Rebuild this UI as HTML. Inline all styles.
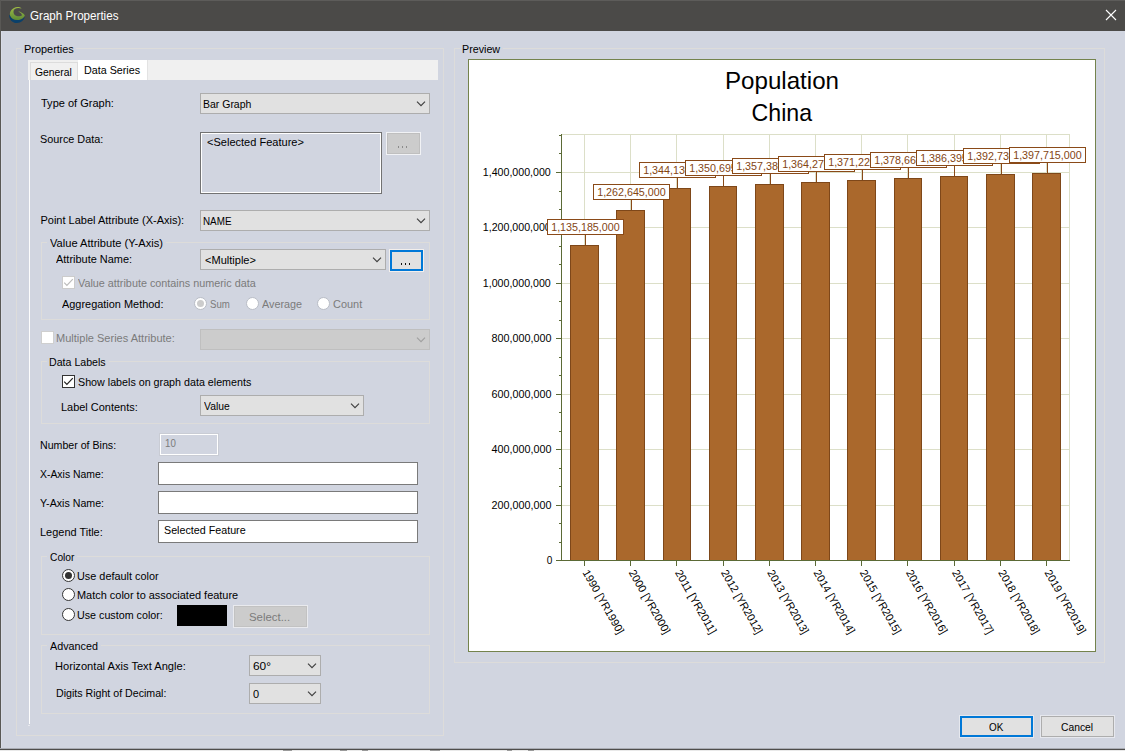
<!DOCTYPE html>
<html><head><meta charset="utf-8"><title>Graph Properties</title>
<style>
html,body{margin:0;padding:0}
body{width:1125px;height:751px;overflow:hidden;position:relative;background:#d1d5e0;font-family:"Liberation Sans",sans-serif;font-size:11px;color:#000}
.a{position:absolute;box-sizing:border-box}
.t{position:absolute;white-space:nowrap;line-height:13px;transform-origin:0 0;display:inline-block}
.gb{position:absolute;box-sizing:border-box;border:1px solid #dddcda}
.gl{position:absolute;background:#d1d5e0;height:13px}
.cb{position:absolute;box-sizing:border-box;border:1px solid #adadad;background:#e1e1e1}
.cbd{position:absolute;box-sizing:border-box;border:1px solid #bfbfbf;background:#cccccc}
.ed{position:absolute;box-sizing:border-box;border:1px solid #7a7a7a;background:#fff}
.chev{position:absolute;width:10px;height:6px}
.rad{position:absolute;box-sizing:border-box;width:13px;height:13px;border-radius:50%;border:1px solid #333;background:#fff}
.chk{position:absolute;box-sizing:border-box;width:13px;height:13px;border:1px solid #333;background:#fff}
</style></head><body>

<div class="a" style="left:0;top:0;width:1125px;height:31px;background:#4b4a48"></div>
<div class="a" style="left:0;top:0;width:1125px;height:1px;background:#5d5c5a"></div>
<div class="a" style="left:0;top:0;width:1px;height:750px;background:#595855"></div>
<div class="a" style="left:1px;top:31px;width:1px;height:718px;background:#d8dce7"></div>
<div class="a" style="left:0;top:748px;width:1125px;height:1px;background:#a9acb4"></div>
<div class="a" style="left:0;top:749px;width:1125px;height:1px;background:#4e4d4b"></div>
<div class="a" style="left:0;top:750px;width:1125px;height:1px;background:#e9e9e9"></div>
<div class="a" style="left:283px;top:750px;width:9px;height:1px;background:#9a9a9a"></div>
<div class="a" style="left:340px;top:750px;width:7px;height:1px;background:#9a9a9a"></div>
<div class="a" style="left:362px;top:750px;width:6px;height:1px;background:#9a9a9a"></div>
<div class="a" style="left:430px;top:750px;width:10px;height:1px;background:#9a9a9a"></div>
<div class="a" style="left:507px;top:750px;width:5px;height:1px;background:#9a9a9a"></div>
<div class="a" style="left:528px;top:750px;width:6px;height:1px;background:#9a9a9a"></div>
<svg class="a" style="left:1104px;top:8px" width="14" height="14" viewBox="0 0 14 14"><path d="M2 2 L12 12 M12 2 L2 12" stroke="#ffffff" stroke-width="1.1" fill="none"/></svg>
<svg class="a" style="left:8px;top:6px" width="18" height="18" viewBox="0 0 18 18">
<defs><linearGradient id="gg" x1="0" y1="0" x2="0" y2="1"><stop offset="0" stop-color="#9fbd45"/><stop offset="1" stop-color="#5c8a36"/></linearGradient></defs>
<path d="M1.3 8.4 C0.5 12.6 4 17 8.8 17 C13.2 17 16.3 14 16.7 10.8 C14.8 13.4 11.5 14.3 8.6 13.9 C5 13.3 2.4 11 1.3 8.4 Z" fill="#0a406a"/>
<path d="M13.6 2.4 C11.8 1 8.6 0.6 6 1.9 C2.6 3.6 1.3 6.9 2.2 9.7 C3.2 12.5 6.4 14.2 9.6 14 C13.2 13.8 16.2 11.7 16.8 9.2 C15.4 7.4 12.6 5.6 10.2 5.3 C12 6.4 13.6 7.8 14 9.2 C12.8 10.2 10.6 10.6 8.6 10 C6.2 9.2 5 6.8 5.6 4.7 C6.4 2.2 9.6 1.2 13.6 2.4 Z" fill="url(#gg)"/>
</svg>
<div class="gb" style="left:16px;top:48px;width:428px;height:688px"></div>
<div class="gb" style="left:454px;top:48px;width:651px;height:615px"></div>
<div class="a" style="left:28px;top:60px;width:410px;height:20px;background:#f0f0f0"></div>
<div class="a" style="left:30px;top:62px;width:48px;height:18px;background:#f0f0f0;border:1px solid #dcdcdc;border-bottom:none"></div>
<div class="a" style="left:78px;top:60px;width:69px;height:20px;background:#ffffff"></div>
<div class="a" style="left:147px;top:60px;width:1px;height:20px;background:#e3e3e3"></div>
<div class="a" style="left:29px;top:80px;width:1px;height:644px;background:#fdfdfd"></div>
<div class="a" style="left:28px;top:725px;width:2px;height:1px;background:#e8e9ee"></div>
<div class="gb" style="left:41px;top:242px;width:389px;height:78px"></div>
<div class="gb" style="left:41px;top:361px;width:389px;height:63px"></div>
<div class="gb" style="left:41px;top:556px;width:389px;height:79px"></div>
<div class="gb" style="left:41px;top:645px;width:389px;height:69px"></div>
<div class="gl" style="left:21px;top:43px;width:55px"></div>
<div class="gl" style="left:460px;top:43px;width:43px"></div>
<div class="gl" style="left:47px;top:237px;width:119px"></div>
<div class="gl" style="left:47px;top:356px;width:62px"></div>
<div class="gl" style="left:47px;top:551px;width:30px"></div>
<div class="gl" style="left:47px;top:640px;width:54px"></div>
<div class="cb" style="left:200px;top:93px;width:230px;height:21px"></div>
<svg class="chev" style="left:416px;top:101px" viewBox="0 0 10 6"><path d="M1 0.6 L5 4.6 L9 0.6" stroke="#404040" stroke-width="1.15" fill="none"/></svg>
<div class="cb" style="left:200px;top:210px;width:230px;height:21px"></div>
<svg class="chev" style="left:416px;top:218px" viewBox="0 0 10 6"><path d="M1 0.6 L5 4.6 L9 0.6" stroke="#404040" stroke-width="1.15" fill="none"/></svg>
<div class="cb" style="left:200px;top:249px;width:186px;height:21px"></div>
<svg class="chev" style="left:372px;top:257px" viewBox="0 0 10 6"><path d="M1 0.6 L5 4.6 L9 0.6" stroke="#404040" stroke-width="1.15" fill="none"/></svg>
<div class="cbd" style="left:200px;top:329px;width:230px;height:21px"></div>
<svg class="chev" style="left:416px;top:337px" viewBox="0 0 10 6"><path d="M1 0.6 L5 4.6 L9 0.6" stroke="#a0a0a0" stroke-width="1.15" fill="none"/></svg>
<div class="cb" style="left:200px;top:395px;width:164px;height:21px"></div>
<svg class="chev" style="left:350px;top:403px" viewBox="0 0 10 6"><path d="M1 0.6 L5 4.6 L9 0.6" stroke="#404040" stroke-width="1.15" fill="none"/></svg>
<div class="cb" style="left:249px;top:655px;width:72px;height:21px"></div>
<svg class="chev" style="left:307px;top:663px" viewBox="0 0 10 6"><path d="M1 0.6 L5 4.6 L9 0.6" stroke="#404040" stroke-width="1.15" fill="none"/></svg>
<div class="cb" style="left:249px;top:683px;width:72px;height:21px"></div>
<svg class="chev" style="left:307px;top:691px" viewBox="0 0 10 6"><path d="M1 0.6 L5 4.6 L9 0.6" stroke="#404040" stroke-width="1.15" fill="none"/></svg>
<div class="a" style="left:200px;top:132px;width:182px;height:62px;background:#d1d5e0;border:1px solid #727272;box-shadow:inset 0 0 0 1px #ffffff"></div>
<div class="a" style="left:386px;top:132px;width:35px;height:23px;background:#cccccc;border:1px solid #f1f2f5;box-shadow:inset 0 0 0 1px #bfbfbf"></div>
<div class="a" style="left:398px;top:146px;width:1px;height:2px;background:#8b8b8b"></div>
<div class="a" style="left:402px;top:146px;width:1px;height:2px;background:#8b8b8b"></div>
<div class="a" style="left:406px;top:146px;width:1px;height:2px;background:#8b8b8b"></div>
<div class="a" style="left:389px;top:249px;width:35px;height:23px;background:#e1e1e1;border:1px solid #f3efec;box-shadow:inset 0 0 0 2px #0078d7"></div>
<div class="a" style="left:401px;top:263px;width:1px;height:2px;background:#101010"></div>
<div class="a" style="left:405px;top:263px;width:1px;height:2px;background:#101010"></div>
<div class="a" style="left:409px;top:263px;width:1px;height:2px;background:#101010"></div>
<div class="chk" style="left:62px;top:276px;border-color:#cccccc"></div>
<svg class="a" style="left:62px;top:276px" width="13" height="13" viewBox="0 0 13 13"><path d="M2.2 6.6 L4.9 9.3 L10.8 3.1" stroke="#bcbcbc" stroke-width="1.2" fill="none"/></svg>
<div class="chk" style="left:41px;top:331px;border-color:#cfcfcf"></div>
<div class="chk" style="left:62px;top:375px"></div>
<svg class="a" style="left:62px;top:375px" width="13" height="13" viewBox="0 0 13 13"><path d="M2.2 6.6 L4.9 9.3 L10.8 3.1" stroke="#222" stroke-width="1.2" fill="none"/></svg>
<div class="rad" style="left:194px;top:297px;border-color:#b9bdc6"></div>
<div class="a" style="left:197px;top:300px;width:7px;height:7px;border-radius:50%;background:#cccccc"></div>
<div class="rad" style="left:246px;top:297px;border-color:#b9bdc6"></div>
<div class="rad" style="left:317px;top:297px;border-color:#b9bdc6"></div>
<div class="rad" style="left:62px;top:569px;"></div>
<div class="a" style="left:65px;top:572px;width:7px;height:7px;border-radius:50%;background:#333"></div>
<div class="rad" style="left:62px;top:588px;"></div>
<div class="rad" style="left:62px;top:608px;"></div>
<div class="a" style="left:159px;top:433px;width:60px;height:23px;background:#d1d5e0;border:1px solid #c9ccd4;box-shadow:inset 0 0 0 1px #ffffff"></div>
<div class="ed" style="left:158px;top:462px;width:260px;height:23px"></div>
<div class="ed" style="left:158px;top:491px;width:260px;height:23px"></div>
<div class="ed" style="left:158px;top:520px;width:260px;height:23px"></div>
<div class="a" style="left:177px;top:605px;width:50px;height:21px;background:#000"></div>
<div class="a" style="left:233px;top:605px;width:75px;height:23px;background:#cccccc;border:1px solid #e9eaee;box-shadow:inset 0 0 0 1px #c2c2c2"></div>
<div class="a" style="left:959px;top:715px;width:75px;height:23px;background:#e1e1e1;border:1px solid #e6e8ee;box-shadow:inset 0 0 0 2px #0078d7"></div>
<div class="a" style="left:1040px;top:715px;width:75px;height:23px;background:#e1e1e1;border:1px solid #e6e8ee;box-shadow:inset 0 0 0 1px #adadad"></div>
<svg class="a" style="left:468px;top:59px" width="628" height="593" viewBox="468 59 628 593" font-family="Liberation Sans, sans-serif" font-size="11">
<rect x="468.5" y="59.5" width="627" height="592" fill="#ffffff" stroke="#74834d"/>
<text x="782" y="88.7" font-size="24.4" text-anchor="middle" fill="#000" textLength="114" lengthAdjust="spacingAndGlyphs">Population</text>
<text x="781.8" y="121.4" font-size="24.4" text-anchor="middle" fill="#000" textLength="60.5" lengthAdjust="spacingAndGlyphs">China</text>
<path d="M584.5 134V560 M630.5 134V560 M676.5 134V560 M723.5 134V560 M769.5 134V560 M815.5 134V560 M861.5 134V560 M907.5 134V560 M954.5 134V560 M1000.5 134V560 M1046.5 134V560 M561 505.5H1070 M561 449.5H1070 M561 394.5H1070 M561 338.5H1070 M561 283.5H1070 M561 227.5H1070 M561 172.5H1070 M561 134.5H1070 M1069.5 134V560" stroke="#dcdfc8" stroke-width="1" fill="none" shape-rendering="crispEdges"/>
<rect x="570.5" y="245.5" width="28" height="315.0" fill="#aa682c" stroke="#7e4719" shape-rendering="crispEdges"/>
<rect x="616.5" y="210.5" width="28" height="350.0" fill="#aa682c" stroke="#7e4719" shape-rendering="crispEdges"/>
<rect x="663.5" y="188.5" width="27" height="372.0" fill="#aa682c" stroke="#7e4719" shape-rendering="crispEdges"/>
<rect x="709.5" y="186.5" width="27" height="374.0" fill="#aa682c" stroke="#7e4719" shape-rendering="crispEdges"/>
<rect x="755.5" y="184.5" width="28" height="376.0" fill="#aa682c" stroke="#7e4719" shape-rendering="crispEdges"/>
<rect x="801.5" y="182.5" width="28" height="378.0" fill="#aa682c" stroke="#7e4719" shape-rendering="crispEdges"/>
<rect x="847.5" y="180.5" width="28" height="380.0" fill="#aa682c" stroke="#7e4719" shape-rendering="crispEdges"/>
<rect x="894.5" y="178.5" width="27" height="382.0" fill="#aa682c" stroke="#7e4719" shape-rendering="crispEdges"/>
<rect x="940.5" y="176.5" width="27" height="384.0" fill="#aa682c" stroke="#7e4719" shape-rendering="crispEdges"/>
<rect x="986.5" y="174.5" width="28" height="386.0" fill="#aa682c" stroke="#7e4719" shape-rendering="crispEdges"/>
<rect x="1032.5" y="173.5" width="28" height="387.0" fill="#aa682c" stroke="#7e4719" shape-rendering="crispEdges"/>
<path d="M561.5 134V561 M556 560.5H1070 M556 560.5H561 M559 542.5H561 M559 523.5H561 M556 505.5H561 M559 486.5H561 M559 468.5H561 M556 449.5H561 M559 431.5H561 M559 412.5H561 M556 394.5H561 M559 375.5H561 M559 357.5H561 M556 338.5H561 M559 320.5H561 M559 301.5H561 M556 283.5H561 M559 264.5H561 M559 246.5H561 M556 227.5H561 M559 209.5H561 M559 191.5H561 M556 172.5H561 M559 153.5H561 M559 135.5H561 M584.5 560V566 M630.5 560V566 M676.5 560V566 M723.5 560V566 M769.5 560V566 M815.5 560V566 M861.5 560V566 M907.5 560V566 M954.5 560V566 M1000.5 560V566 M1046.5 560V566" stroke="#5b6a36" stroke-width="1" fill="none" shape-rendering="crispEdges"/>
<text x="552.3" y="564.2" text-anchor="end" fill="#000" textLength="5.6" lengthAdjust="spacingAndGlyphs">0</text>
<text x="551.5" y="509.2" text-anchor="end" fill="#000" textLength="60" lengthAdjust="spacingAndGlyphs">200,000,000</text>
<text x="551.5" y="453.2" text-anchor="end" fill="#000" textLength="60" lengthAdjust="spacingAndGlyphs">400,000,000</text>
<text x="551.5" y="398.2" text-anchor="end" fill="#000" textLength="60" lengthAdjust="spacingAndGlyphs">600,000,000</text>
<text x="551.5" y="342.2" text-anchor="end" fill="#000" textLength="60" lengthAdjust="spacingAndGlyphs">800,000,000</text>
<text x="550.8" y="287.2" text-anchor="end" fill="#000" textLength="68" lengthAdjust="spacingAndGlyphs">1,000,000,000</text>
<text x="550.8" y="231.2" text-anchor="end" fill="#000" textLength="68" lengthAdjust="spacingAndGlyphs">1,200,000,000</text>
<text x="550.8" y="176.2" text-anchor="end" fill="#000" textLength="68" lengthAdjust="spacingAndGlyphs">1,400,000,000</text>
<text transform="translate(585.7 570.5) rotate(60.2)" x="0" y="4" fill="#000" textLength="72" lengthAdjust="spacingAndGlyphs">1990 [YR1990]</text>
<text transform="translate(631.9 570.5) rotate(60.2)" x="0" y="4" fill="#000" textLength="72" lengthAdjust="spacingAndGlyphs">2000 [YR2000]</text>
<text transform="translate(678.1 570.5) rotate(60.2)" x="0" y="4" fill="#000" textLength="72" lengthAdjust="spacingAndGlyphs">2011 [YR2011]</text>
<text transform="translate(724.3 570.5) rotate(60.2)" x="0" y="4" fill="#000" textLength="72" lengthAdjust="spacingAndGlyphs">2012 [YR2012]</text>
<text transform="translate(770.5 570.5) rotate(60.2)" x="0" y="4" fill="#000" textLength="72" lengthAdjust="spacingAndGlyphs">2013 [YR2013]</text>
<text transform="translate(816.7 570.5) rotate(60.2)" x="0" y="4" fill="#000" textLength="72" lengthAdjust="spacingAndGlyphs">2014 [YR2014]</text>
<text transform="translate(862.9 570.5) rotate(60.2)" x="0" y="4" fill="#000" textLength="72" lengthAdjust="spacingAndGlyphs">2015 [YR2015]</text>
<text transform="translate(909.1 570.5) rotate(60.2)" x="0" y="4" fill="#000" textLength="72" lengthAdjust="spacingAndGlyphs">2016 [YR2016]</text>
<text transform="translate(955.3 570.5) rotate(60.2)" x="0" y="4" fill="#000" textLength="72" lengthAdjust="spacingAndGlyphs">2017 [YR2017]</text>
<text transform="translate(1001.5 570.5) rotate(60.2)" x="0" y="4" fill="#000" textLength="72" lengthAdjust="spacingAndGlyphs">2018 [YR2018]</text>
<text transform="translate(1047.7 570.5) rotate(60.2)" x="0" y="4" fill="#000" textLength="72" lengthAdjust="spacingAndGlyphs">2019 [YR2019]</text>
<path d="M585.5 235V245" stroke="#8a4a18" shape-rendering="crispEdges"/>
<rect x="547.5" y="219.5" width="76" height="15" fill="#fff" stroke="#8a4a18" shape-rendering="crispEdges"/>
<text x="551.2" y="231.0" fill="#834513" textLength="68.5" lengthAdjust="spacingAndGlyphs">1,135,185,000</text>
<path d="M631.5 200V210" stroke="#8a4a18" shape-rendering="crispEdges"/>
<rect x="593.5" y="184.5" width="76" height="15" fill="#fff" stroke="#8a4a18" shape-rendering="crispEdges"/>
<text x="597.2" y="196.0" fill="#834513" textLength="68.5" lengthAdjust="spacingAndGlyphs">1,262,645,000</text>
<path d="M677.5 178V188" stroke="#8a4a18" shape-rendering="crispEdges"/>
<rect x="639.5" y="162.5" width="76" height="15" fill="#fff" stroke="#8a4a18" shape-rendering="crispEdges"/>
<text x="643.2" y="174.0" fill="#834513" textLength="68.5" lengthAdjust="spacingAndGlyphs">1,344,130,000</text>
<path d="M723.5 176V186" stroke="#8a4a18" shape-rendering="crispEdges"/>
<rect x="685.5" y="160.5" width="76" height="15" fill="#fff" stroke="#8a4a18" shape-rendering="crispEdges"/>
<text x="689.2" y="172.0" fill="#834513" textLength="68.5" lengthAdjust="spacingAndGlyphs">1,350,695,000</text>
<path d="M770.5 174V184" stroke="#8a4a18" shape-rendering="crispEdges"/>
<rect x="732.5" y="158.5" width="76" height="15" fill="#fff" stroke="#8a4a18" shape-rendering="crispEdges"/>
<text x="736.2" y="170.0" fill="#834513" textLength="68.5" lengthAdjust="spacingAndGlyphs">1,357,380,000</text>
<path d="M816.5 172V182" stroke="#8a4a18" shape-rendering="crispEdges"/>
<rect x="778.5" y="156.5" width="76" height="15" fill="#fff" stroke="#8a4a18" shape-rendering="crispEdges"/>
<text x="782.2" y="168.0" fill="#834513" textLength="68.5" lengthAdjust="spacingAndGlyphs">1,364,270,000</text>
<path d="M862.5 170V180" stroke="#8a4a18" shape-rendering="crispEdges"/>
<rect x="824.5" y="154.5" width="76" height="15" fill="#fff" stroke="#8a4a18" shape-rendering="crispEdges"/>
<text x="828.2" y="166.0" fill="#834513" textLength="68.5" lengthAdjust="spacingAndGlyphs">1,371,220,000</text>
<path d="M908.5 168V178" stroke="#8a4a18" shape-rendering="crispEdges"/>
<rect x="870.5" y="152.5" width="76" height="15" fill="#fff" stroke="#8a4a18" shape-rendering="crispEdges"/>
<text x="874.2" y="164.0" fill="#834513" textLength="68.5" lengthAdjust="spacingAndGlyphs">1,378,665,000</text>
<path d="M954.5 166V176" stroke="#8a4a18" shape-rendering="crispEdges"/>
<rect x="916.5" y="150.5" width="76" height="15" fill="#fff" stroke="#8a4a18" shape-rendering="crispEdges"/>
<text x="920.2" y="162.0" fill="#834513" textLength="68.5" lengthAdjust="spacingAndGlyphs">1,386,395,000</text>
<path d="M1001.5 164V174" stroke="#8a4a18" shape-rendering="crispEdges"/>
<rect x="963.5" y="148.5" width="76" height="15" fill="#fff" stroke="#8a4a18" shape-rendering="crispEdges"/>
<text x="967.2" y="160.0" fill="#834513" textLength="68.5" lengthAdjust="spacingAndGlyphs">1,392,730,000</text>
<path d="M1047.5 163V173" stroke="#8a4a18" shape-rendering="crispEdges"/>
<rect x="1009.5" y="147.5" width="76" height="15" fill="#fff" stroke="#8a4a18" shape-rendering="crispEdges"/>
<text x="1013.2" y="159.0" fill="#834513" textLength="68.5" lengthAdjust="spacingAndGlyphs">1,397,715,000</text>
</svg>
<span class="t" style="left:23.60px;top:43.00px;color:#000000;font-size:11px;line-height:13px;transform:scaleX(0.9927)">Properties</span>
<span class="t" style="left:34.57px;top:66.00px;color:#000000;font-size:11px;line-height:13px;transform:scaleX(0.9415)">General</span>
<span class="t" style="left:83.68px;top:64.00px;color:#000000;font-size:11px;line-height:13px;transform:scaleX(0.9748)">Data Series</span>
<span class="t" style="left:40.60px;top:97.00px;color:#000000;font-size:11px;line-height:13px;transform:scaleX(1.0011)">Type of Graph:</span>
<span class="t" style="left:39.52px;top:133.00px;color:#000000;font-size:11px;line-height:13px;transform:scaleX(0.9858)">Source Data:</span>
<span class="t" style="left:202.70px;top:98.00px;color:#000000;font-size:11px;line-height:13px;transform:scaleX(0.9530)">Bar Graph</span>
<span class="t" style="left:206.63px;top:136.00px;color:#000000;font-size:11px;line-height:13px;transform:scaleX(1.0028)">&lt;Selected Feature&gt;</span>
<span class="t" style="left:40.48px;top:214.00px;color:#000000;font-size:11px;line-height:13px">Point Label Attribute (X-Axis):</span>
<span class="t" style="left:202.69px;top:215.00px;color:#000000;font-size:11px;line-height:13px;transform:scaleX(0.8955)">NAME</span>
<span class="t" style="left:49.54px;top:237.00px;color:#000000;font-size:11px;line-height:13px;transform:scaleX(1.0101)">Value Attribute (Y-Axis)</span>
<span class="t" style="left:55.51px;top:253.00px;color:#000000;font-size:11px;line-height:13px;transform:scaleX(0.9950)">Attribute Name:</span>
<span class="t" style="left:204.54px;top:254.00px;color:#000000;font-size:11px;line-height:13px;transform:scaleX(1.0041)">&lt;Multiple&gt;</span>
<span class="t" style="left:77.90px;top:277.00px;color:#7b7b7b;font-size:11px;line-height:13px;transform:scaleX(0.9828)">Value attribute contains numeric data</span>
<span class="t" style="left:61.51px;top:298.00px;color:#000000;font-size:11px;line-height:13px;transform:scaleX(0.9933)">Aggregation Method:</span>
<span class="t" style="left:209.69px;top:298.00px;color:#7b7b7b;font-size:11px;line-height:13px;transform:scaleX(0.8768)">Sum</span>
<span class="t" style="left:261.51px;top:298.00px;color:#7b7b7b;font-size:11px;line-height:13px;transform:scaleX(0.9801)">Average</span>
<span class="t" style="left:332.71px;top:298.00px;color:#7b7b7b;font-size:11px;line-height:13px;transform:scaleX(0.9953)">Count</span>
<span class="t" style="left:55.67px;top:332.00px;color:#7b7b7b;font-size:11px;line-height:13px;transform:scaleX(1.0016)">Multiple Series Attribute:</span>
<span class="t" style="left:48.68px;top:356.00px;color:#000000;font-size:11px;line-height:13px;transform:scaleX(0.9653)">Data Labels</span>
<span class="t" style="left:77.56px;top:376.00px;color:#000000;font-size:11px;line-height:13px;transform:scaleX(0.9737)">Show labels on graph data elements</span>
<span class="t" style="left:60.55px;top:401.00px;color:#000000;font-size:11px;line-height:13px;transform:scaleX(0.9960)">Label Contents:</span>
<span class="t" style="left:203.52px;top:400.00px;color:#000000;font-size:11px;line-height:13px;transform:scaleX(0.9402)">Value</span>
<span class="t" style="left:39.50px;top:439.00px;color:#000000;font-size:11px;line-height:13px;transform:scaleX(0.9651)">Number of Bins:</span>
<span class="t" style="left:164.62px;top:437.00px;color:#7b7b7b;font-size:11px;line-height:13px;transform:scaleX(0.8835)">10</span>
<span class="t" style="left:39.62px;top:468.00px;color:#000000;font-size:11px;line-height:13px;transform:scaleX(0.9475)">X-Axis Name:</span>
<span class="t" style="left:39.74px;top:497.00px;color:#000000;font-size:11px;line-height:13px;transform:scaleX(0.9671)">Y-Axis Name:</span>
<span class="t" style="left:39.55px;top:526.00px;color:#000000;font-size:11px;line-height:13px;transform:scaleX(0.9962)">Legend Title:</span>
<span class="t" style="left:163.56px;top:524.00px;color:#000000;font-size:11px;line-height:13px;transform:scaleX(0.9746)">Selected Feature</span>
<span class="t" style="left:49.54px;top:551.00px;color:#000000;font-size:11px;line-height:13px;transform:scaleX(0.9307)">Color</span>
<span class="t" style="left:76.68px;top:570.00px;color:#000000;font-size:11px;line-height:13px;transform:scaleX(0.9880)">Use default color</span>
<span class="t" style="left:76.52px;top:589.00px;color:#000000;font-size:11px;line-height:13px;transform:scaleX(0.9948)">Match color to associated feature</span>
<span class="t" style="left:76.66px;top:609.00px;color:#000000;font-size:11px;line-height:13px;transform:scaleX(0.9748)">Use custom color:</span>
<span class="t" style="left:248.74px;top:611.00px;color:#7b7b7b;font-size:11px;line-height:13px;transform:scaleX(1.0362)">Select...</span>
<span class="t" style="left:49.64px;top:640.00px;color:#000000;font-size:11px;line-height:13px;transform:scaleX(0.9797)">Advanced</span>
<span class="t" style="left:54.59px;top:660.00px;color:#000000;font-size:11px;line-height:13px;transform:scaleX(1.0102)">Horizontal Axis Text Angle:</span>
<span class="t" style="left:55.68px;top:687.00px;color:#000000;font-size:11px;line-height:13px;transform:scaleX(0.9658)">Digits Right of Decimal:</span>
<span class="t" style="left:252.56px;top:660.00px;color:#000000;font-size:11px;line-height:13px;transform:scaleX(1.0792)">60°</span>
<span class="t" style="left:252.61px;top:688.00px;color:#000000;font-size:11px;line-height:13px;transform:scaleX(0.9966)">0</span>
<span class="t" style="left:988.51px;top:721.00px;color:#000000;font-size:11px;line-height:13px;transform:scaleX(0.8993)">OK</span>
<span class="t" style="left:1060.54px;top:721.00px;color:#000000;font-size:11px;line-height:13px;transform:scaleX(0.9376)">Cancel</span>
<span class="t" style="left:461.61px;top:43.00px;color:#000000;font-size:11px;line-height:13px;transform:scaleX(0.9737)">Preview</span>
<span class="t" style="left:29.55px;top:9.00px;color:#ffffff;font-size:12px;line-height:15px;transform:scaleX(0.9682)">Graph Properties</span>
</body></html>
